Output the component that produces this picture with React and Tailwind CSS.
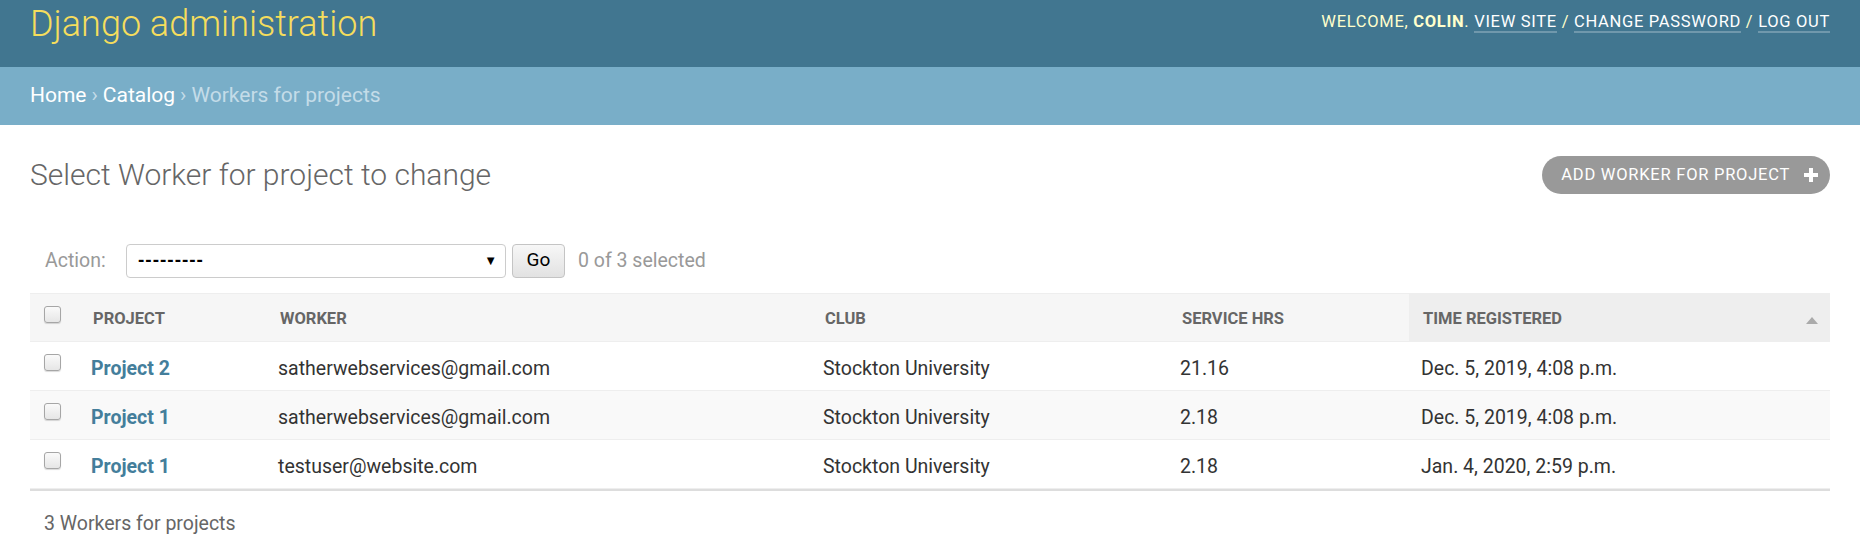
export default function App() {
  const rows = [
    { project: "Project 2", worker: "satherwebservices@gmail.com", club: "Stockton University", hrs: "21.16", time: "Dec. 5, 2019, 4:08 p.m.", alt: false },
    { project: "Project 1", worker: "satherwebservices@gmail.com", club: "Stockton University", hrs: "2.18", time: "Dec. 5, 2019, 4:08 p.m.", alt: true },
    { project: "Project 1", worker: "testuser@website.com", club: "Stockton University", hrs: "2.18", time: "Jan. 4, 2020, 2:59 p.m.", alt: false },
  ];

  const Checkbox = () => (
    <div className="w-[17px] h-[17px] rounded-[3px] border border-[#a6a6a6] bg-gradient-to-b from-[#fafafa] to-[#e6e6e6] shadow-[0_1px_1px_rgba(0,0,0,0.15)]" />
  );

  return (
    <div className="w-[1860px] h-[554px] bg-white font-['Roboto',sans-serif] text-[#333] overflow-hidden">
      {/* Header */}
      <header className="h-[67px] bg-[#417690] flex justify-between px-[30px]">
        <h1 className="text-[36px] font-light leading-[36px] pt-[6px] text-[#f5dd5d]">
          Django administration
        </h1>
        <div className="pt-[10px] text-[16.5px] leading-[24px] tracking-[0.7px] uppercase text-[#ffffcc] whitespace-nowrap">
          Welcome, <strong className="font-bold">colin</strong>.{" "}
          <a className="text-white border-b-2 border-white/25">View site</a> /{" "}
          <a className="text-white border-b-2 border-white/25">Change password</a> /{" "}
          <a className="text-white border-b-2 border-white/25">Log out</a>
        </div>
      </header>

      {/* Breadcrumbs */}
      <div className="h-[58px] bg-[#79aec8] px-[30px] flex items-center text-[21px] text-[#c4dce8] whitespace-nowrap">
        <a className="text-white">Home</a>
        <span className="mx-[5px]">›</span>
        <a className="text-white">Catalog</a>
        <span className="mx-[5px]">›</span>
        <span>Workers for projects</span>
      </div>

      {/* Content */}
      <div className="px-[30px]">
        <div className="h-[100px] flex items-center justify-between">
          <h1 className="text-[30px] font-light leading-[36px] text-[#666]">
            Select Worker for project to change
          </h1>
          <a className="h-[38px] flex items-center gap-[14px] rounded-full bg-[#999] pl-[19px] pr-[12px] text-white text-[16.5px] tracking-[0.75px] uppercase">
            <span>Add worker for project</span>
            <svg width="14" height="14" viewBox="0 0 14 14">
              <path d="M5 0h4v5h5v4H9v5H5V9H0V5h5z" fill="white" />
            </svg>
          </a>
        </div>

        {/* Actions */}
        <div className="h-[68px] pt-[3px] flex items-center pl-[15px] text-[19.5px]">
          <span className="text-[#999] w-[81px]">Action:</span>
          <div className="w-[380px] h-[34px] rounded-[4px] border border-[#ccc] bg-white flex items-center justify-between pl-[11px] pr-[8px]">
            <span className="font-['Liberation_Sans',Arial,sans-serif] text-[19px] font-bold text-black tracking-[1px]">---------</span>
            <span className="text-[13px] text-black">▼</span>
          </div>
          <div className="ml-[6px] w-[53px] h-[34px] rounded-[4px] border border-[#c4c4c4] bg-gradient-to-b from-[#f7f7f7] to-[#e2e2e2] flex items-center justify-center text-[19px] text-black">
            Go
          </div>
          <span className="ml-[13px] text-[#999]">0 of 3 selected</span>
        </div>

        {/* Table */}
        <div className="w-full">
          <div className="flex h-[49px] bg-[#f6f6f6] border-t border-[#eee] border-b border-b-[#eee] text-[16.5px] font-bold uppercase text-[#666] leading-[24px]">
            <div className="w-[49px] pl-[14px] pt-[12px]"><Checkbox /></div>
            <div className="w-[187px] pl-[14px] pt-[13px]">Project</div>
            <div className="w-[545px] pl-[14px] pt-[13px]">Worker</div>
            <div className="w-[357px] pl-[14px] pt-[13px]">Club</div>
            <div className="w-[241px] pl-[14px] pt-[13px]">Service hrs</div>
            <div className="flex-1 bg-[#eee] pl-[14px] pt-[13px] flex justify-between pr-[12px]">
              <span>Time registered</span>
              <svg width="12" height="8" viewBox="0 0 12 8" className="mt-[9px]">
                <path d="M0 8L6 1L12 8Z" fill="#aaa" />
              </svg>
            </div>
          </div>
          {rows.map((r, i) => (
            <div
              key={i}
              className={`flex h-[49px] border-b border-[#eee] text-[19.5px] leading-[24px] ${r.alt ? "bg-[#f9f9f9]" : "bg-white"}`}
            >
              <div className="w-[49px] pl-[14px] pt-[12px]"><Checkbox /></div>
              <div className="w-[187px] pl-[12px] pt-[15px]">
                <a className="text-[#447e9b] font-bold">{r.project}</a>
              </div>
              <div className="w-[545px] pl-[12px] pt-[15px]">{r.worker}</div>
              <div className="w-[357px] pl-[12px] pt-[15px]">{r.club}</div>
              <div className="w-[241px] pl-[12px] pt-[15px]">{r.hrs}</div>
              <div className="flex-1 pl-[12px] pt-[15px]">{r.time}</div>
            </div>
          ))}
          <div className="border-t-2 border-[#ddd] pt-[16px] pl-[14px] text-[19.5px] leading-[33px] text-[#666]">
            3 Workers for projects
          </div>
        </div>
      </div>
    </div>
  );
}
